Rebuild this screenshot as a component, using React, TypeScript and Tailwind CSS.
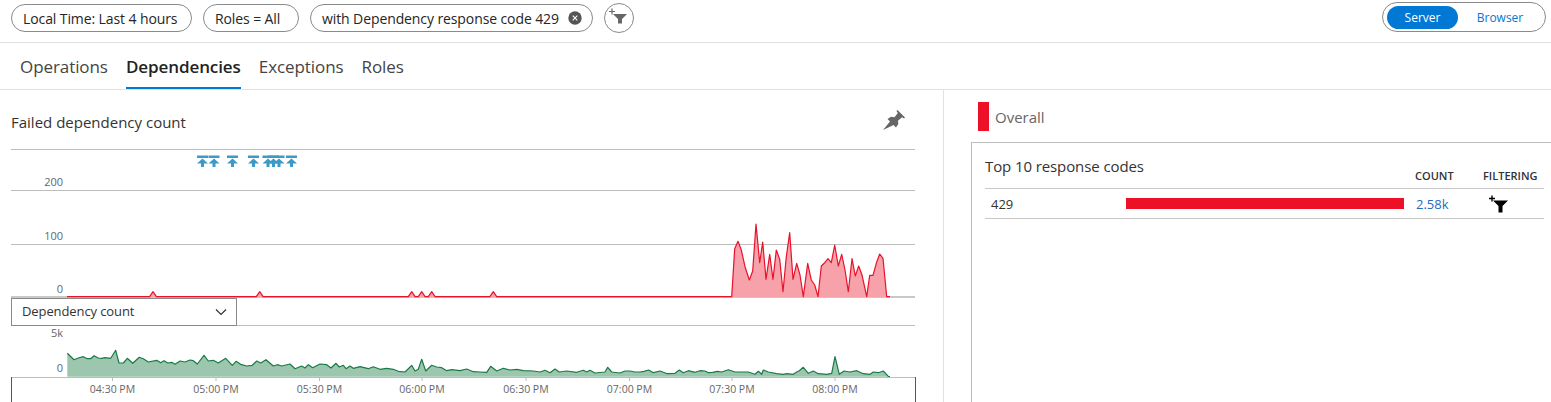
import React from 'react';

type Pt = [number, number];

// Samples are read off 3x crops, so each series keeps the crop origin it was taken from
const fromCrop = (ox: number, oy: number, pts: Pt[]): Pt[] =>
  pts.map(([x, y]) => [+(ox + x / 3).toFixed(1), +(oy + y / 3).toFixed(1)] as Pt);

const BASE_RED = 296.7;
const BASE_GREEN = 375.7;

const bump = (x: number): Pt[] => [
  [x - 3.4, BASE_RED],
  [x, 291.7],
  [x + 3.4, BASE_RED],
];

const redSeries: Pt[] = [
  [67, BASE_RED],
  ...bump(153),
  ...bump(259.7),
  ...bump(411.7),
  ...bump(421.7),
  ...bump(431.7),
  ...bump(493.3),
  ...fromCrop(700, 200, [
    [95, 290], [104, 146], [114, 124], [124, 150], [135, 200], [148, 240], [158, 213], [168, 72],
    [179, 188], [188, 126], [198, 238], [209, 163], [219, 238], [229, 150], [239, 178], [249, 275],
    [259, 170], [269, 98], [279, 238], [290, 190], [300, 225], [310, 290], [323, 190], [334, 240],
    [344, 255], [354, 290], [364, 198], [374, 188], [384, 176], [394, 188], [404, 135], [415, 198],
    [425, 163], [435, 210], [445, 275], [456, 176], [466, 228], [476, 198], [486, 225], [500, 290],
    [509, 226], [519, 226], [529, 190], [539, 162], [549, 175], [560, 290], [570, 290],
  ]),
];

const greenSeries: Pt[] = [
  ...fromCrop(0, 285, [
    [202, 202], [222, 221], [235, 216], [250, 212], [262, 218], [272, 218], [282, 209], [295, 216],
    [305, 217], [315, 215], [332, 217], [347, 193], [357, 231], [370, 231], [382, 217], [398, 232],
    [418, 214], [430, 218], [445, 228], [470, 223], [482, 230], [492, 224], [503, 231], [515, 229],
    [525, 235], [540, 225], [555, 228], [570, 222], [580, 224], [592, 234], [612, 208], [625, 225],
    [640, 223], [655, 231], [677, 217], [697, 238], [708, 226], [722, 235], [740, 240], [757, 238],
    [770, 225], [782, 231], [798, 221], [820, 240], [832, 236], [845, 240], [870, 234], [885, 248],
    [905, 240], [915, 246], [925, 236], [938, 245], [948, 240],
  ]),
  ...fromCrop(320, 285, [
    [0, 234], [20, 236], [33, 246], [48, 232], [58, 243], [70, 238], [78, 248], [90, 240], [100, 247],
    [120, 242], [145, 248], [160, 242], [180, 250], [200, 247], [220, 250], [235, 256], [255, 258],
    [275, 238], [285, 255], [295, 250], [305, 220], [317, 255], [335, 238], [350, 243], [365, 245],
    [380, 254], [395, 251], [420, 254], [440, 249], [460, 257], [480, 258], [500, 259], [512, 241],
    [530, 255], [550, 247], [570, 252], [590, 250], [610, 254], [640, 255], [660, 258], [675, 253],
    [690, 260], [705, 249], [718, 258], [740, 255], [770, 259], [790, 253], [800, 258], [810, 253],
    [825, 261], [855, 258], [863, 244], [875, 258], [900, 261], [915, 255], [930, 255], [945, 258],
  ]),
  ...fromCrop(640, 285, [
    [0, 258], [12, 256], [26, 252], [40, 260], [60, 255], [82, 263], [105, 262], [118, 252], [130, 260],
    [145, 254], [165, 259], [180, 254], [195, 255], [205, 260], [218, 259], [232, 256], [245, 258],
    [265, 251], [285, 258], [325, 258], [345, 265], [355, 256], [365, 265], [370, 252], [385, 258],
    [410, 263], [430, 265], [440, 263], [460, 265], [470, 258], [478, 254], [490, 244], [505, 262],
    [520, 255], [535, 263], [560, 265], [575, 262], [585, 212], [598, 265], [612, 255], [630, 258],
    [650, 254], [670, 263], [690, 265], [700, 258], [715, 260], [730, 255], [745, 271], [750, 272],
  ]),
];

const line = (pts: Pt[]) => pts.map(([x, y]) => `${x},${y}`).join(' ');
const area = (pts: Pt[], base: number) =>
  `${pts[0][0]},${base} ${line(pts)} ${pts[pts.length - 1][0]},${base}`;

const markers = [202.5, 214, 232.5, 253.5, 268, 273.5, 279, 291.5];
const ticks = [
  { x: 112.5, label: '04:30 PM' },
  { x: 216, label: '05:00 PM' },
  { x: 319.5, label: '05:30 PM' },
  { x: 422, label: '06:00 PM' },
  { x: 526, label: '06:30 PM' },
  { x: 629.5, label: '07:00 PM' },
  { x: 732, label: '07:30 PM' },
  { x: 835, label: '08:00 PM' },
];

function Pill({ width, children }: { width: string; children: React.ReactNode }) {
  return (
    <div className={`flex h-[28px] items-center justify-between rounded-full border border-[#8a8a8a] pl-[11px] pr-[10px] text-[14px] tracking-[-0.1px] text-[#252525] ${width}`}>
      {children}
    </div>
  );
}

function Tab({ label, active }: { label: string; active?: boolean }) {
  return (
    <div
      className={
        active
          ? 'flex h-[46px] items-center border-b-[2px] border-[#0078d4] pt-[3px] font-semibold text-[#222]'
          : 'flex h-[46px] items-center border-b-[2px] border-transparent pt-[3px] text-[#444]'
      }
    >
      {label}
    </div>
  );
}

function FailedChart() {
  return (
    <svg width="943" height="149" viewBox="0 149 943 149" className="block font-['Open_Sans',sans-serif]">
      <g stroke="#bdbdbd" strokeWidth="1">
        <line x1="11" x2="915" y1="149.5" y2="149.5" />
        <line x1="11" x2="915" y1="190.5" y2="190.5" />
        <line x1="11" x2="915" y1="244.5" y2="244.5" />
      </g>
      <line x1="11" x2="915" y1="297" y2="297" stroke="#c8c8c8" strokeWidth="2" />
      <g fontSize="11" fill="#666" textAnchor="end">
        <text x="63" y="186">200</text>
        <text x="63" y="240">100</text>
        <text x="63" y="293">0</text>
      </g>
      <polygon points={area(redSeries, 297)} fill="#f7a1aa" />
      <polyline points={line(redSeries)} fill="none" stroke="#e8122b" strokeWidth="1.2" strokeLinejoin="round" />
      <g fill="#3d9ac7">
        {markers.map((x) => (
          <g key={x}>
            <rect x={x - 5.5} y="155.500" width="11" height="2.500" />
            <path d={`M${x} 158.500 l5.500 5 h-4 v3.500 h-3 v-3.500 h-4 z`} />
          </g>
        ))}
      </g>
    </svg>
  );
}

function CountChart() {
  return (
    <svg width="943" height="77" viewBox="0 325 943 77" className="block font-['Open_Sans',sans-serif]">
      <g fontSize="11" fill="#666" textAnchor="end">
        <text x="63" y="336">5k</text>
        <text x="63" y="371">0</text>
      </g>
      <polygon points={area(greenSeries, BASE_GREEN)} fill="#9cc7ae" />
      <polyline points={line(greenSeries)} fill="none" stroke="#187a46" strokeWidth="1.2" strokeLinejoin="round" />
      <line x1="11" x2="915" y1="376.5" y2="376.5" stroke="#bdbdbd" />
      <line x1="11.5" x2="11.5" y1="376" y2="402" stroke="#1f5fbf" />
      <line x1="915.5" x2="915.5" y1="376" y2="402" stroke="#1f5fbf" />
      {ticks.map((t) => (
        <g key={t.label}>
          <line x1={t.x} x2={t.x} y1="376" y2="380" stroke="#bdbdbd" />
          <text x={t.x} y="392" fontSize="10.5" fill="#666" textAnchor="middle">
            {t.label}
          </text>
        </g>
      ))}
    </svg>
  );
}

export default function App() {
  return (
    <div className="flex h-[402px] w-[1551px] flex-col overflow-hidden bg-white font-['Open_Sans',sans-serif]">
      {/* Barra de filtros */}
      <div className="flex h-[43px] shrink-0 items-start justify-between border-b border-[#e1e1e1] pl-[11px] pr-[5px] pt-[3px]">
        <div className="flex items-center gap-[11px]">
          <Pill width="w-[181px]">Local Time: Last 4 hours</Pill>
          <Pill width="w-[96px]">Roles = All</Pill>
          <Pill width="w-[283px]">
            <span>with Dependency response code 429</span>
            <svg width="14" height="14" viewBox="0 0 14 14">
              <circle cx="7" cy="7" r="6.7" fill="#555" />
              <path d="M4.7 4.7l4.6 4.6M9.3 4.7l-4.6 4.6" stroke="#fff" strokeWidth="1.1" />
            </svg>
          </Pill>
          <div className="h-[30px] w-[30px] rounded-full border border-[#8a8a8a]">
            <svg width="28" height="28" viewBox="0 0 28 28">
              <path d="M4 7.500h6M7 4.500v6" stroke="#666" strokeWidth="1.2" />
              <path d="M8 10h14l-5 5v4.500h-4V15z" fill="#666" />
            </svg>
          </div>
        </div>
        <div className="-mt-px flex h-[30px] w-[164px] items-center rounded-full border border-[#8a8a8a] pl-[4px] text-[12px]">
          <div className="flex h-[23px] w-[71px] items-center justify-center rounded-full bg-[#0078d4] pt-[2px] text-white">Server</div>
          <div className="flex w-[84px] justify-center pt-[2px] text-[#0078d4]">Browser</div>
        </div>
      </div>

      {/* Abas */}
      <div className="flex h-[47px] shrink-0 gap-[18px] border-b border-[#e1e1e1] pl-[20px] text-[17px] tracking-[-0.08px]">
        <Tab label="Operations" />
        <Tab label="Dependencies" active />
        <Tab label="Exceptions" />
        <Tab label="Roles" />
      </div>

      <div className="flex min-h-0 flex-1">
        {/* Painel esquerdo */}
        <div className="w-[944px] shrink-0 border-r border-[#e1e1e1]">
          <div className="flex h-[59px] items-start justify-between pl-[11px] pr-[38px] pt-[21px]">
            <span className="text-[15px] leading-[22px] text-[#333]">Failed dependency count</span>
            <svg width="22" height="20" viewBox="0 0 22 20" className="-mt-[1px]">
              <path d="M0 20L7 11.500 4.500 9 8 6.800 11.500 7.200 14.800 3 13.500 1 14.500 0 22 7.500 21 8.500 19 7.300 15 10.700 15.300 14 13 17.500 10.500 15z" fill="#666" />
            </svg>
          </div>
          <FailedChart />
          <div className="ml-[11px] h-[28px] w-[904px] border-b border-[#bdbdbd]">
            <div className="flex h-[28px] w-[226px] items-center justify-between border border-[#8a8a8a] pl-[10px] pr-[9px] text-[13px] tracking-[-0.1px] text-[#333]">
              <span>Dependency count</span>
              <svg width="12" height="8" viewBox="0 0 12 8">
                <path d="M1 1.500l5 5 5-5" fill="none" stroke="#333" strokeWidth="1.2" />
              </svg>
            </div>
          </div>
          <CountChart />
        </div>

        {/* Painel direito */}
        <div className="min-w-0 flex-1">
          <div className="flex h-[52px] pl-[34px] pt-[12px]">
            <div className="h-[29px] w-[11px] bg-[#ed1127]" />
            <span className="ml-[6px] pt-[1px] text-[15px] leading-[29px] text-[#666]">Overall</span>
          </div>
          <div className="ml-[27px] h-[300px] border-l border-t border-[#bdbdbd] pl-[13px] pr-[7px]">
            <div className="flex h-[46px] border-b border-[#c8c8c8]">
              <span className="w-[430px] pt-[12px] text-[15px] leading-[22px] tracking-[-0.1px] text-[#333]">Top 10 response codes</span>
              <span className="w-[68px] pt-[26px] text-[11px] font-semibold leading-[14px] text-[#333]">COUNT</span>
              <span className="pt-[26px] text-[11px] font-semibold leading-[14px] text-[#333]">FILTERING</span>
            </div>
            <div className="flex h-[30px] items-center border-b border-[#c8c8c8] text-[13px]">
              <span className="w-[141px] pl-[6px] pt-[2px] text-[#333]">429</span>
              <div className="h-[11px] w-[278px] bg-[#ed1127]" />
              <span className="ml-[12px] w-[72px] pt-[2px] text-[#1b6ec2]">2.58k</span>
              <svg width="20" height="18" viewBox="0 0 20 18">
                <path d="M1 3.500h6M4 .5v6" stroke="#000" strokeWidth="1.4" />
                <path d="M5 5.500h15l-5.500 5.500v6.500h-4V11z" fill="#000" />
              </svg>
            </div>
          </div>
        </div>
      </div>
    </div>
  );
}
